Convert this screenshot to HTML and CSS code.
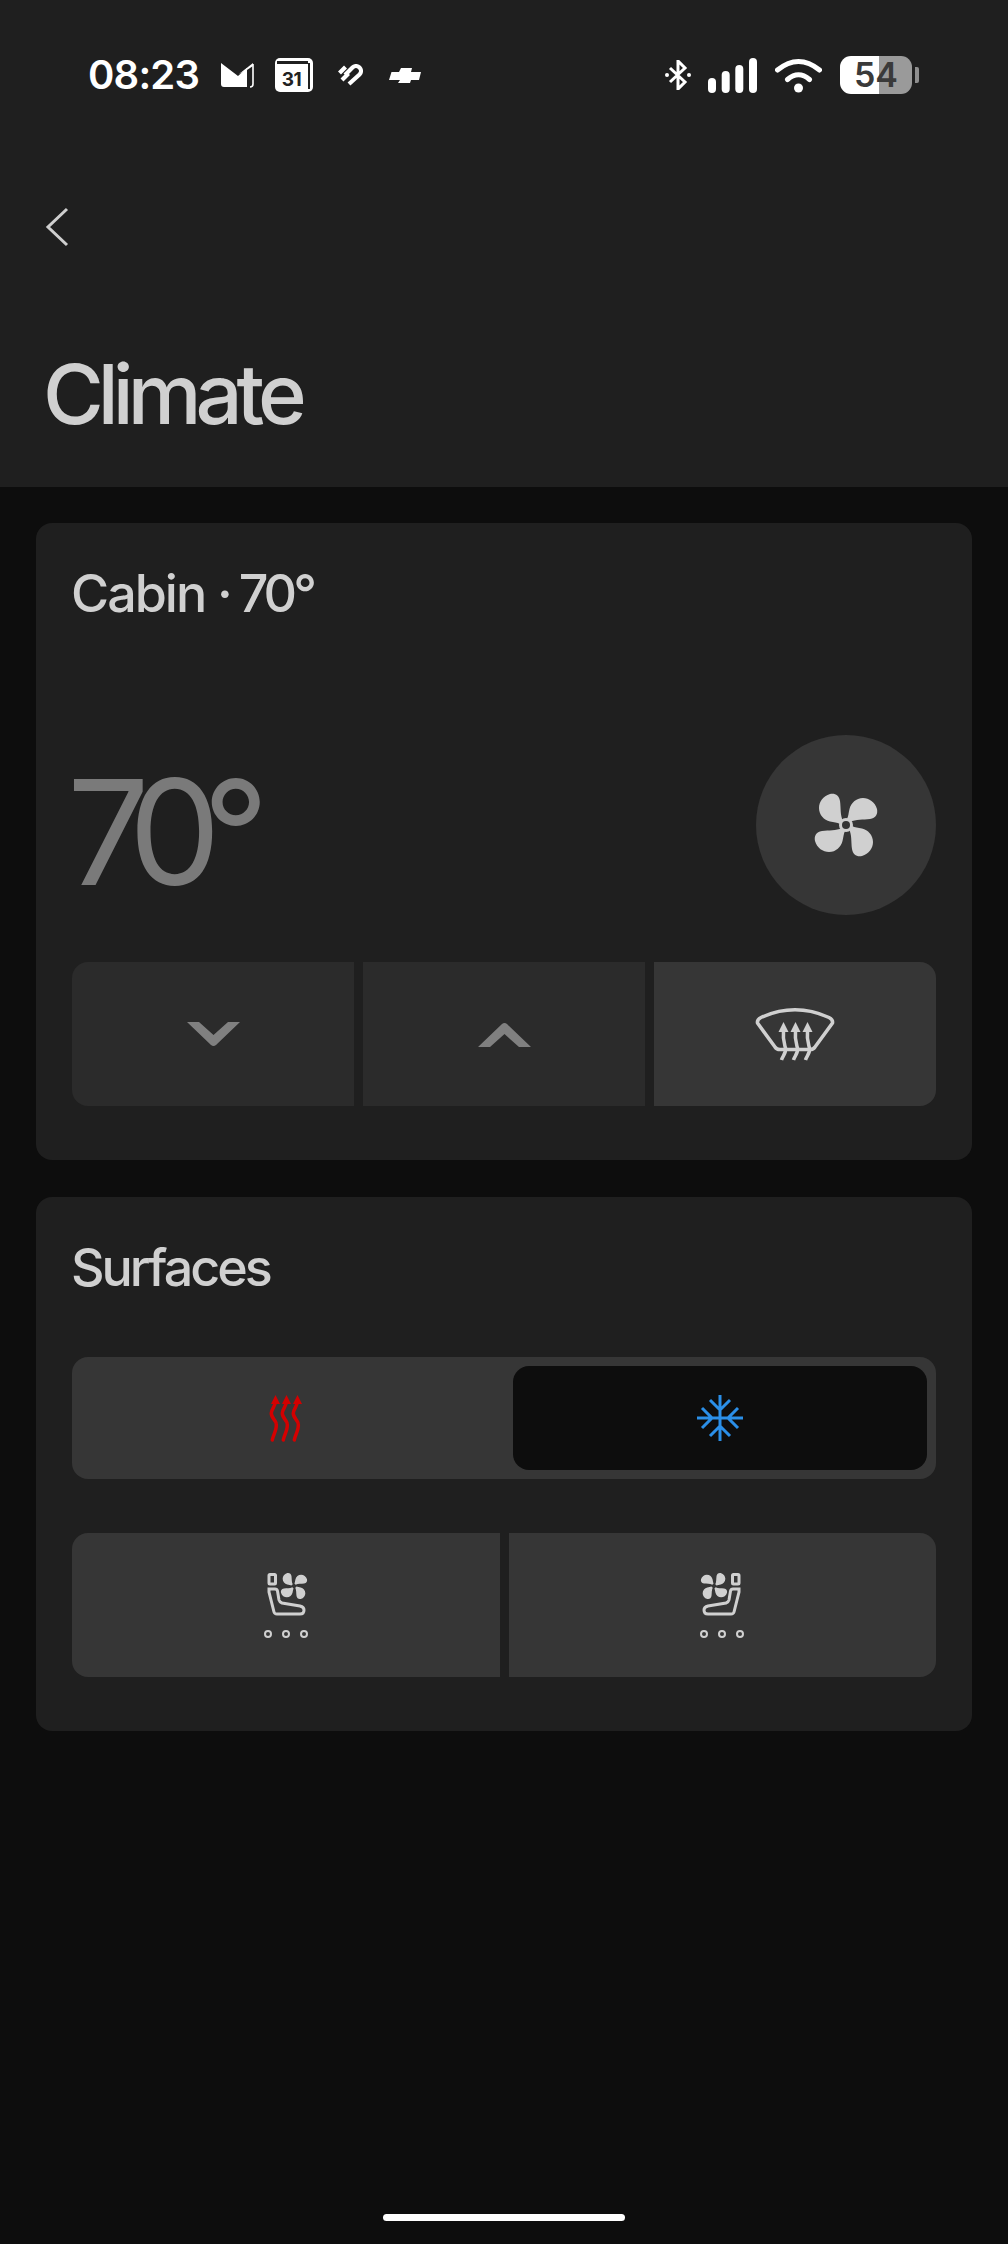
FILE: index.html
```html
<!DOCTYPE html>
<html lang="en">
<head>
<meta charset="utf-8">
<title>Climate</title>
<link rel="stylesheet" href="styles.css">
</head>
<body>
<svg class="defs" width="0" height="0" aria-hidden="true">
  <defs>
    <g id="blades">
      <path id="blade" d="M-3-4C-6-10-5-17-6-24C-7-30-11-32-16-31C-23-29-27-23-27-17C-27-10-22-5-16-3.500C-12-2.500-9-2.500-6-1Z"/>
      <use href="#blade" transform="rotate(90)"/>
      <use href="#blade" transform="rotate(180)"/>
      <use href="#blade" transform="rotate(270)"/>
    </g>
    <g id="seat">
      <rect x="7" y="5.500" width="6.500" height="9.500" rx="1" class="seat-line"/>
      <path d="M7 20H13Q15 20 15.500 22L17 31Q17.500 33 20 34L38 37Q42 38 42 41Q42 45 38 45H15Q12.500 45 12 43L7 23Z" class="seat-line"/>
      <use href="#blades" transform="translate(32 17) scale(.42)" class="seat-fan"/>
      <circle cx="6" cy="65" r="3" class="seat-dot"/>
      <circle cx="24" cy="65" r="3" class="seat-dot"/>
      <circle cx="42" cy="65" r="3" class="seat-dot"/>
    </g>
    <g id="heat-arrow">
      <path d="M4.300 49C5 44 9 39 8.300 33C8 29 3 27 3.300 22C3.500 18 7 16 7.300 11" class="heat-line"/>
      <path d="M7.500 4L12 13H3Z" class="heat-head"/>
    </g>
    <g id="defrost-arrow">
      <path d="M0 38C1 34 5 31 4 26C3 22 1 18 2 8" class="def-thin"/>
      <path d="M2 0L7 10H-3Z" class="def-head"/>
    </g>
  </defs>
</svg>

<header class="header">
  <div class="status">
    <div class="status-left">
      <span class="time">08:23</span>
      <svg class="st-mail" width="34" height="26" viewBox="0 0 34 26"><path d="M0 1L17 14L26 6V25H3Q0 25 0 22Z" fill="#fff"/><path d="M32 2V22Q32 25 29 25" fill="none" stroke="#fff" stroke-width="1.600"/><path d="M18 12L32 1V4L26 8" fill="#fff"/></svg>
      <svg class="st-cal" width="38" height="34" viewBox="0 0 38 34"><rect width="38" height="34" rx="5" fill="#fff"/><rect x="2" y="3" width="31" height="3" fill="#1f1f1f"/><rect x="33" y="5" width="2" height="26" fill="#1f1f1f"/><text x="16.500" y="28" class="cal-num">31</text></svg>
      <svg class="st-heart" width="26" height="22" viewBox="0 0 26 22"><path d="M12 20L22.500 10.500A4.800 4.800 0 0 0 15.500 3.500L8 11M5 16L11.500 9.500M2.500 9L8.500 3" fill="none" stroke="#fff" stroke-width="4.200"/></svg>
      <svg class="st-bow" width="32" height="15" viewBox="0 0 32 15"><path d="M2.500 4H10L12 0H23L22 4H32L30 12H22L21 15H9L11 12H0Z" fill="#fff"/></svg>
    </div>
    <div class="status-right">
      <svg class="st-bt" width="26" height="30" viewBox="0 0 26 30"><path d="M5 8L20 22L13 29V1L20 8L5 22" fill="none" stroke="#fff" stroke-width="3"/><circle cx="2" cy="15" r="2" fill="#fff"/><circle cx="24" cy="15" r="2" fill="#fff"/></svg>
      <svg class="st-sig" width="49" height="35" viewBox="0 0 49 35"><rect x="0" y="20" width="8" height="15" rx="4" fill="#fff"/><rect x="13.700" y="13" width="8" height="22" rx="4" fill="#fff"/><rect x="27.300" y="7" width="8" height="28" rx="4" fill="#fff"/><rect x="41" y="0" width="8" height="35" rx="4" fill="#fff"/></svg>
      <svg class="st-wifi" width="47" height="35" viewBox="0 0 47 35"><path d="M2.500 12Q23.500-5 44.500 12M12.500 21.500Q23.500 12 34.500 21.500" fill="none" stroke="#fff" stroke-width="5" stroke-linecap="round"/><circle cx="23.500" cy="30" r="4.500" fill="#fff"/></svg>
      <div class="battery"><span class="battery-num">54</span></div>
      <span class="battery-nub"></span>
    </div>
  </div>
  <div class="back">
    <svg width="24" height="40" viewBox="0 0 24 40"><path d="M22 2L3 20L22 38" fill="none" stroke="#cfcfcf" stroke-width="3"/></svg>
  </div>
  <h1 class="title">Climate</h1>
</header>

<main class="content">
  <section class="card card-cabin">
    <h2 class="card-title">Cabin <span class="title-temp">· 70°</span></h2>
    <div class="temp-row">
      <span class="temp">70°</span>
      <div class="fan-btn">
        <svg width="70" height="70" viewBox="-35 -35 70 70"><use href="#blades" fill="#d0d0d0"/><circle r="7" fill="#d0d0d0"/><circle r="4" fill="#363636"/></svg>
      </div>
    </div>
    <div class="controls">
      <div class="ctrl ctrl-dim">
        <svg width="53" height="25" viewBox="0 0 53 25"><path d="M0 0H12L26.500 13L41 0H53L29 23Q26.500 25 24 23Z" fill="#808080"/></svg>
      </div>
      <div class="ctrl ctrl-dim">
        <svg width="53" height="25" viewBox="0 0 53 25"><path d="M0 25H12L26.500 12L41 25H53L29 2Q26.500 0 24 2Z" fill="#808080"/></svg>
      </div>
      <div class="ctrl">
        <svg width="80" height="60" viewBox="0 0 80 60">
          <path d="M2.500 19C2 16.500 3 15 6 13.500Q40-2 74 13.500C77 15 78 16.500 77.500 19L60 43Q58.500 45.500 55 45.500H25Q21.500 45.500 20 43Z" fill="none" stroke="#d0d0d0" stroke-width="3.500"/>
          <use href="#defrost-arrow" transform="translate(26.500 18)"/>
          <use href="#defrost-arrow" transform="translate(38.500 18)"/>
          <use href="#defrost-arrow" transform="translate(50.500 18)"/>
        </svg>
      </div>
    </div>
  </section>

  <section class="card card-surfaces">
    <h2 class="card-title card-title-tight">Surfaces</h2>
    <div class="segment">
      <div class="seg-item seg-heat">
        <svg width="40" height="55" viewBox="0 0 40 55">
          <use href="#heat-arrow"/>
          <use href="#heat-arrow" transform="translate(11 0)"/>
          <use href="#heat-arrow" transform="translate(22 0)"/>
        </svg>
      </div>
      <div class="seg-item seg-active">
        <svg width="50" height="50" viewBox="-25 -25 50 50"><path d="M0-23V23M-23 0H23M-10-18L0-8L10-18M-10 18L0 8L10 18M-18-10L-8 0L-18 10M18-10L8 0L18 10" fill="none" stroke="#2b8fe8" stroke-width="3"/></svg>
      </div>
    </div>
    <div class="seats">
      <div class="seat-btn">
        <svg width="48" height="72" viewBox="0 0 48 72"><use href="#seat"/></svg>
      </div>
      <div class="seat-btn">
        <svg class="flip" width="48" height="72" viewBox="0 0 48 72"><use href="#seat"/></svg>
      </div>
    </div>
  </section>
</main>

<div class="home-bar"></div>
</body>
</html>
```

FILE: styles.css
```css
* { box-sizing: border-box; }

html, body { margin: 0; padding: 0; }

body {
  width: 1008px;
  height: 2244px;
  background: #0d0d0d;
  font-family: Inter, "Liberation Sans", sans-serif;
  display: flex;
  flex-direction: column;
  overflow: hidden;
}

.defs { position: absolute; }

svg { display: block; }

/* header */
.header {
  height: 487px;
  background: #1f1f1f;
  padding-top: 56px;
  flex: none;
}

.status {
  height: 38px;
  padding-left: 88px;
  padding-right: 89px;
  display: flex;
  justify-content: space-between;
  align-items: center;
}

.status-left,
.status-right {
  display: flex;
  align-items: center;
}

.time {
  width: 133px;
  font-size: 40px;
  line-height: 38px;
  font-weight: 600;
  letter-spacing: -0.8px;
  color: #fff;
}

.st-cal { margin-left: 20px; }
.st-heart { margin-left: 24px; }
.st-bow { margin-left: 26px; }
.cal-num {
  font-family: Inter, "Liberation Sans", sans-serif;
  font-size: 19px;
  font-weight: 700;
  letter-spacing: -0.5px;
  fill: #222;
  text-anchor: middle;
}

.st-sig { margin-left: 17px; }
.st-wifi { margin-left: 18px; }

.battery {
  width: 72px;
  height: 38px;
  margin-left: 18px;
  border-radius: 11px;
  background: linear-gradient(90deg, #fff 54%, #9a9a9a 54%);
  display: flex;
  align-items: center;
  justify-content: center;
}

.battery-num {
  font-size: 34px;
  font-weight: 600;
  line-height: 38px;
  color: #3a3a3a;
}

.battery-nub {
  width: 4px;
  height: 16px;
  margin-left: 3px;
  border-radius: 0 2px 2px 0;
  background: #8e8e8e;
}

.back {
  margin-top: 113px;
  padding-left: 45px;
}

.title {
  margin: 0;
  margin-top: 105px;
  padding-left: 43px;
  font-size: 83px;
  line-height: 84px;
  font-weight: 550;
  letter-spacing: -6px;
  color: #d0d0d0;
}

/* cards */
.content {
  padding: 36px 36px 0;
  display: flex;
  flex-direction: column;
  gap: 37px;
}

.card {
  background: #1f1f1f;
  border-radius: 16px;
  padding: 36px;
}

.card-cabin { height: 637px; }
.card-surfaces { height: 534px; }

.card-title {
  margin: 0 0 0 -1px;
  font-size: 52px;
  line-height: 70px;
  font-weight: 550;
  letter-spacing: -2px;
  color: #d0d0d0;
}

.card-title-tight { letter-spacing: -3px; }

.title-temp { letter-spacing: -4px; }

.temp-row {
  margin-top: 106px;
  height: 180px;
  display: flex;
  justify-content: space-between;
  align-items: center;
}

.temp {
  margin-left: -5px;
  margin-top: 14px;
  font-size: 146px;
  line-height: 180px;
  font-weight: 400;
  letter-spacing: -18.5px;
  color: #7a7a7a;
}

.fan-btn {
  width: 180px;
  height: 180px;
  border-radius: 50%;
  background: #363636;
  display: flex;
  align-items: center;
  justify-content: center;
}

.controls {
  margin-top: 47px;
  height: 144px;
  display: flex;
  gap: 9px;
  border-radius: 16px;
  overflow: hidden;
}

.ctrl {
  flex: 1;
  background: #363636;
  display: flex;
  align-items: center;
  justify-content: center;
}

.ctrl-dim { background: #2b2b2b; }

.segment {
  margin-top: 54px;
  height: 122px;
  padding: 9px;
  border-radius: 16px;
  background: #363636;
  display: flex;
}

.seg-item {
  display: flex;
  align-items: center;
  justify-content: center;
}

.seg-heat {
  flex: 1;
  padding-right: 18px;
}

.seg-active {
  flex: none;
  width: 414px;
  background: #0d0d0d;
  border-radius: 16px;
}

.seats {
  margin-top: 54px;
  height: 144px;
  display: flex;
  gap: 9px;
  border-radius: 16px;
  overflow: hidden;
}

.seat-btn {
  flex: 1;
  background: #363636;
  display: flex;
  align-items: center;
  justify-content: center;
}

.flip { transform: scaleX(-1); }

/* icon parts */
.seat-line { fill: none; stroke: #d0d0d0; stroke-width: 3; }
.seat-fan { fill: #d0d0d0; }
.seat-dot { fill: none; stroke: #d0d0d0; stroke-width: 2; }
.heat-line { fill: none; stroke: #d40000; stroke-width: 3.5; stroke-linecap: round; }
.heat-head { fill: #d40000; }
.def-thin { fill: none; stroke: #d0d0d0; stroke-width: 3.5; }
.def-head { fill: #d0d0d0; }

/* home indicator */
.home-bar {
  position: absolute;
  left: 383px;
  top: 2214px;
  width: 242px;
  height: 7px;
  border-radius: 4px;
  background: #fff;
}
```
